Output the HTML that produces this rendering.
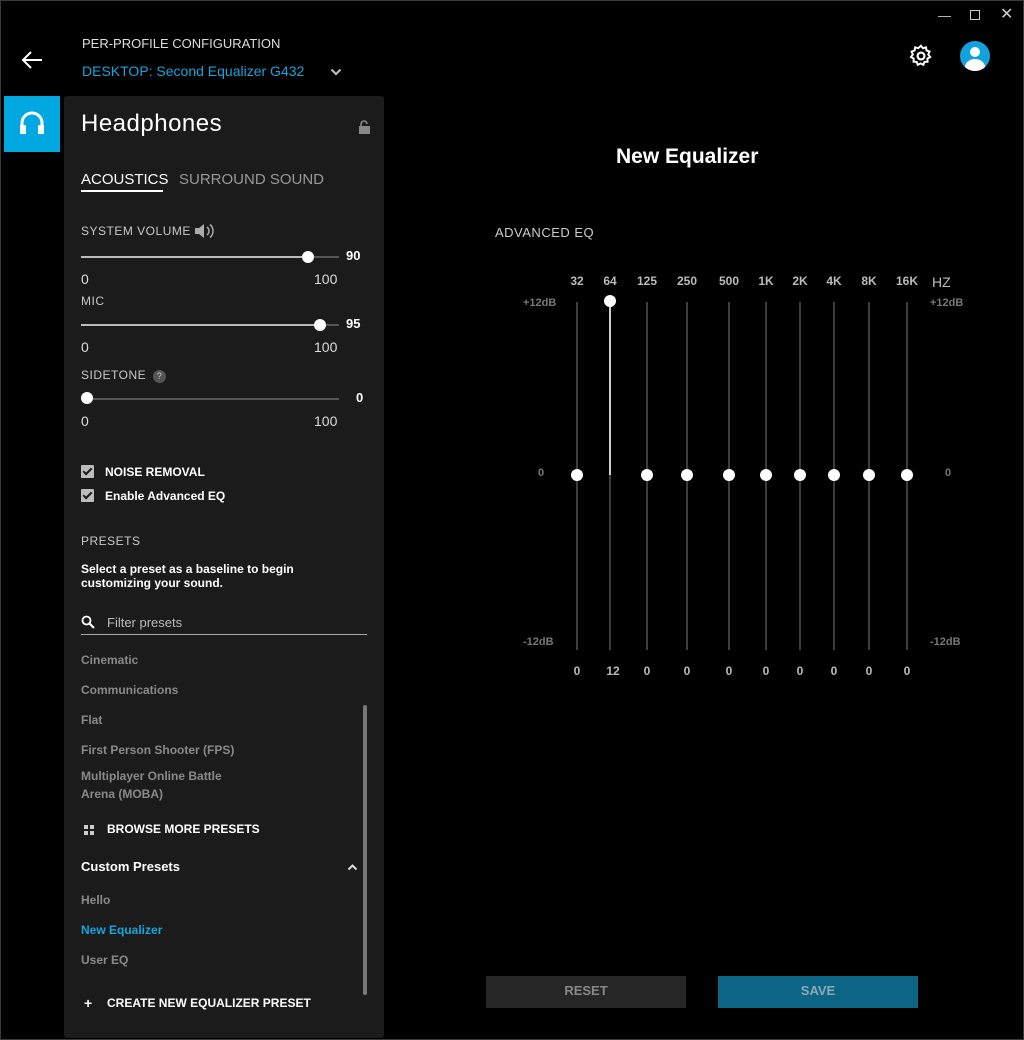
<!DOCTYPE html>
<html><head><style>
body{margin:0;width:1024px;height:1040px;background:#000;font-family:"Liberation Sans",sans-serif;overflow:hidden;position:relative;color:#fff}
.a{position:absolute;white-space:nowrap}
.frame{position:absolute;left:0;top:0;width:1022px;height:1038px;border:1px solid #3a3a3a}
.panel{position:absolute;left:64px;top:96px;width:320px;height:942px;background:#1b1b1b;border-radius:3px}
.lbl{font-size:12px;color:#c8c8c8;letter-spacing:.5px}
.g{color:#8a8a8a}
.track{position:absolute;height:2px;background:#555}
.fill{position:absolute;height:2px;background:#bbb}
.dot{position:absolute;width:12px;height:12px;border-radius:50%;background:#fff}
.cb{position:absolute;width:13px;height:13px;background:#bdbdbd;border-radius:1px}
.cb:after{content:"";position:absolute;left:4px;top:1px;width:3px;height:7px;border:solid #1b1b1b;border-width:0 2px 2px 0;transform:rotate(45deg)}
.b{font-weight:bold}
.vl{position:absolute;top:302px;width:2px;height:348px;background:#3d3d3d}
.ed{position:absolute;width:12px;height:12px;border-radius:50%;background:#fff}
.fq{position:absolute;top:274px;font-size:12px;font-weight:bold;color:#bbb;transform:translateX(-50%)}
.vv{position:absolute;top:664px;font-size:12px;font-weight:bold;color:#bbb;transform:translateX(-50%)}
</style></head><body>
<div class="frame"></div>
<div class="a" style="left:938px;top:8px;font-size:13px;color:#ccc">&#8212;</div>
<div class="a" style="left:970px;top:10px;width:8px;height:8px;border:1.5px solid #ccc"></div>
<div class="a" style="left:1000px;top:4px;font-size:16px;color:#ccc">✕</div>
<svg class="a" style="left:20px;top:50px" width="24" height="20"><path d="M22 10H3M11 2L3 10l8 8" stroke="#fff" stroke-width="2" fill="none"/></svg>
<div class="a" style="left:82px;top:36px;font-size:13px;color:#ddd">PER-PROFILE CONFIGURATION</div>
<div class="a" style="left:82px;top:63px;font-size:14px;color:#16a5dc">DESKTOP: Second Equalizer G432</div>
<svg class="a" style="left:330px;top:68px" width="12" height="8"><path d="M1.5 1.5L6 6l4.5-4.5" stroke="#bbb" stroke-width="2.2" fill="none"/></svg>
<svg class="a" style="left:908px;top:43px" width="26" height="26" viewBox="0 0 24 24"><circle cx="12" cy="12" r="3.2" stroke="#fff" stroke-width="2" fill="none"/><path d="M12 2.5l1.8 2.3 2.8-.8.5 2.9 2.8 1-1.2 2.7 1.8 2.4-2.6 1.4.2 2.9-2.9.1-1 2.8-2.6-1.4-2.6 1.4-1-2.8-2.9-.1.2-2.9-2.6-1.4 1.8-2.4-1.2-2.7 2.8-1 .5-2.9 2.8.8z" stroke="#fff" stroke-width="1.8" fill="none"/></svg>
<div class="a" style="left:960px;top:41px;width:30px;height:30px;border-radius:50%;background:#12a3dd;overflow:hidden"><div class="a" style="left:10px;top:6px;width:10px;height:10px;border-radius:50%;background:#fff"></div><div class="a" style="left:5px;top:18px;width:20px;height:16px;border-radius:50%;background:#fff"></div></div>
<div class="a" style="left:4px;top:96px;width:56px;height:56px;background:#00a8e1"></div>
<svg class="a" style="left:18px;top:110px" width="28" height="26" viewBox="0 0 28 26"><path d="M4 20V13a10 10 0 0 1 20 0v7" stroke="#fff" stroke-width="3" fill="none"/><rect x="2" y="15" width="6" height="9" fill="#fff"/><rect x="20" y="15" width="6" height="9" fill="#fff"/></svg>
<div class="panel"></div>
<div class="a" style="left:81px;top:110px;font-size:24px;letter-spacing:.5px">Headphones</div>
<svg class="a" style="left:358px;top:120px" width="13" height="14"><path d="M3 6V4a3 3 0 0 1 6 0" stroke="#888" stroke-width="1.6" fill="none"/><rect x="1" y="6" width="11" height="8" fill="#888"/></svg>
<div class="a" style="left:81px;top:171px;font-size:15px">ACOUSTICS</div>
<div class="a" style="left:81px;top:190px;width:82px;height:2px;background:#fff"></div>
<div class="a" style="left:179px;top:171px;font-size:15px;color:#999">SURROUND SOUND</div>
<div class="a lbl" style="left:81px;top:224px">SYSTEM VOLUME</div>
<svg class="a" style="left:194px;top:222px" width="22" height="18"><path d="M1 6h4l5-4v14l-5-4H1z" fill="#aaa"/><path d="M13 5a5 5 0 0 1 0 8M16 2.5a8.5 8.5 0 0 1 0 13" stroke="#aaa" stroke-width="1.5" fill="none"/></svg>
<div class="track" style="left:81px;top:256px;width:258px"></div><div class="fill" style="left:81px;top:256px;width:227px"></div><div class="dot" style="left:302px;top:251px"></div>
<div class="a b" style="left:346px;top:248px;font-size:13px">90</div>
<div class="a" style="left:81px;top:271px;font-size:14px;color:#ddd">0</div><div class="a" style="left:314px;top:271px;font-size:14px;color:#ddd">100</div>
<div class="a lbl" style="left:81px;top:294px">MIC</div>
<div class="track" style="left:81px;top:324px;width:258px"></div><div class="fill" style="left:81px;top:324px;width:239px"></div><div class="dot" style="left:314px;top:319px"></div>
<div class="a b" style="left:346px;top:316px;font-size:13px">95</div>
<div class="a" style="left:81px;top:339px;font-size:14px;color:#ddd">0</div><div class="a" style="left:314px;top:339px;font-size:14px;color:#ddd">100</div>
<div class="a lbl" style="left:81px;top:368px">SIDETONE <span style="display:inline-block;width:13px;height:13px;border-radius:50%;background:#555;color:#ccc;font-size:9px;text-align:center;line-height:13px;margin-left:3px">?</span></div>
<div class="track" style="left:81px;top:398px;width:258px"></div><div class="dot" style="left:81px;top:392px"></div>
<div class="a b" style="left:356px;top:390px;font-size:13px">0</div>
<div class="a" style="left:81px;top:413px;font-size:14px;color:#ddd">0</div><div class="a" style="left:314px;top:413px;font-size:14px;color:#ddd">100</div>
<div class="cb" style="left:81px;top:465px"></div><div class="a b" style="left:105px;top:465px;font-size:12px">NOISE REMOVAL</div>
<div class="cb" style="left:81px;top:489px"></div><div class="a b" style="left:105px;top:489px;font-size:12px">Enable Advanced EQ</div>
<div class="a lbl" style="left:81px;top:534px">PRESETS</div>
<div class="a b" style="left:81px;top:562px;font-size:12px;line-height:14px">Select a preset as a baseline to begin<br>customizing your sound.</div>
<svg class="a" style="left:81px;top:615px" width="14" height="14"><circle cx="5.5" cy="5.5" r="4" stroke="#fff" stroke-width="1.8" fill="none"/><path d="M8.5 8.5L13 13" stroke="#fff" stroke-width="2"/></svg>
<div class="a" style="left:107px;top:615px;font-size:13px;color:#bbb">Filter presets</div>
<div class="a" style="left:81px;top:634px;width:286px;height:1px;background:#aaa"></div>
<div class="a b g" style="left:81px;top:653px;font-size:12px">Cinematic</div>
<div class="a b g" style="left:81px;top:683px;font-size:12px">Communications</div>
<div class="a b g" style="left:81px;top:713px;font-size:12px">Flat</div>
<div class="a b g" style="left:81px;top:743px;font-size:12px">First Person Shooter (FPS)</div>
<div class="a b g" style="left:81px;top:767px;font-size:12px;line-height:18px">Multiplayer Online Battle<br>Arena (MOBA)</div>
<div class="a" style="left:363px;top:705px;width:4px;height:290px;background:#777;border-radius:2px"></div>
<svg class="a" style="left:84px;top:825px" width="10" height="10"><rect x="0" y="0" width="4" height="4" fill="#ccc"/><rect x="6" y="0" width="4" height="4" fill="#ccc"/><rect x="0" y="6" width="4" height="4" fill="#ccc"/><rect x="6" y="6" width="4" height="4" fill="#ccc"/></svg>
<div class="a b" style="left:107px;top:822px;font-size:12px">BROWSE MORE PRESETS</div>
<div class="a b" style="left:81px;top:859px;font-size:13px">Custom Presets</div>
<svg class="a" style="left:347px;top:863px" width="11" height="8"><path d="M1.5 6.5L5.5 2.5l4 4" stroke="#ddd" stroke-width="2" fill="none"/></svg>
<div class="a b g" style="left:81px;top:893px;font-size:12px">Hello</div>
<div class="a b" style="left:81px;top:923px;font-size:12px;color:#16a5dc">New Equalizer</div>
<div class="a b g" style="left:81px;top:953px;font-size:12px">User EQ</div>
<div class="a b" style="left:84px;top:995px;font-size:14px">+</div>
<div class="a b" style="left:107px;top:996px;font-size:12px">CREATE NEW EQUALIZER PRESET</div>

<div class="a b" style="left:616px;top:145px;font-size:21px">New Equalizer</div>
<div class="a" style="left:495px;top:225px;font-size:13px;color:#ccc;letter-spacing:.5px">ADVANCED EQ</div>
<div class="a b" style="left:523px;top:297px;font-size:11px;color:#777">+12dB</div>
<div class="a b" style="left:930px;top:297px;font-size:11px;color:#777">+12dB</div>
<div class="a b" style="left:538px;top:467px;font-size:11px;color:#777">0</div>
<div class="a b" style="left:945px;top:467px;font-size:11px;color:#777">0</div>
<div class="a b" style="left:523px;top:636px;font-size:11px;color:#777">-12dB</div>
<div class="a b" style="left:930px;top:636px;font-size:11px;color:#777">-12dB</div>
<div class="a" style="left:932px;top:274px;font-size:14px;color:#bbb">HZ</div>
<div class="vl" style="left:576px"></div><div class="ed" style="left:571px;top:469px"></div><div class="fq" style="left:577px">32</div><div class="vv" style="left:577px">0</div>
<div class="vl" style="left:609px"></div><div class="a" style="left:609px;top:302px;width:2px;height:173px;background:#ccc"></div><div class="ed" style="left:604px;top:295px"></div><div class="fq" style="left:610px">64</div><div class="vv" style="left:613px">12</div>
<div class="vl" style="left:646px"></div><div class="ed" style="left:641px;top:469px"></div><div class="fq" style="left:647px">125</div><div class="vv" style="left:647px">0</div>
<div class="vl" style="left:686px"></div><div class="ed" style="left:681px;top:469px"></div><div class="fq" style="left:687px">250</div><div class="vv" style="left:687px">0</div>
<div class="vl" style="left:728px"></div><div class="ed" style="left:723px;top:469px"></div><div class="fq" style="left:729px">500</div><div class="vv" style="left:729px">0</div>
<div class="vl" style="left:765px"></div><div class="ed" style="left:760px;top:469px"></div><div class="fq" style="left:766px">1K</div><div class="vv" style="left:766px">0</div>
<div class="vl" style="left:799px"></div><div class="ed" style="left:794px;top:469px"></div><div class="fq" style="left:800px">2K</div><div class="vv" style="left:800px">0</div>
<div class="vl" style="left:833px"></div><div class="ed" style="left:828px;top:469px"></div><div class="fq" style="left:834px">4K</div><div class="vv" style="left:834px">0</div>
<div class="vl" style="left:868px"></div><div class="ed" style="left:863px;top:469px"></div><div class="fq" style="left:869px">8K</div><div class="vv" style="left:869px">0</div>
<div class="vl" style="left:906px"></div><div class="ed" style="left:901px;top:469px"></div><div class="fq" style="left:907px">16K</div><div class="vv" style="left:907px">0</div>
<div class="a b" style="left:486px;top:976px;width:200px;height:32px;background:#262626;color:#888;font-size:13px;text-align:center;line-height:30px">RESET</div>
<div class="a b" style="left:718px;top:976px;width:200px;height:32px;background:#0d6585;color:#8ab;font-size:13px;text-align:center;line-height:30px">SAVE</div>
</body></html>
